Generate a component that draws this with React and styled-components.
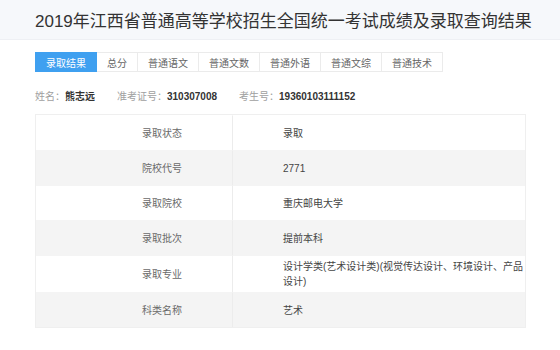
import React from 'react';
import styled, { createGlobalStyle } from 'styled-components';

const GlobalStyle = createGlobalStyle`
    body {
        margin: 0;
        background: #fff;
        font-family: "Liberation Sans", "Noto Sans CJK SC", sans-serif;
    }
`;

const Header = styled.div`
    height: 40px;
    display: flex;
    align-items: center;
    padding-left: 35px;
    background: #f6f8fb;
    border-bottom: 1px solid #eef0f4;
    box-sizing: border-box;
`;

const Title = styled.h1`
    margin: 0;
    font-size: 17px;
    font-weight: normal;
    color: #333;
    letter-spacing: 0;
`;

const Main = styled.div`
    padding: 12px 34px 0 35px;
`;

const Tabs = styled.div`
    display: flex;
    height: 20px;
`;

const Tab = styled.div`
    display: flex;
    align-items: center;
    justify-content: center;
    padding: 0 10px;
    font-size: 10px;
    color: ${p => (p.$active ? '#fff' : '#666')};
    background: ${p => (p.$active ? '#3fa0f0' : '#fff')};
    border: 1px solid ${p => (p.$active ? '#3fa0f0' : '#ebebeb')};
    border-left-width: ${p => (p.$first ? '1px' : '0')};
`;

const Info = styled.div`
    display: flex;
    gap: 22px;
    margin: 18px 0 10px;
    font-size: 10px;
    line-height: 14px;
`;

const Field = styled.span`
    color: #a0a0a0;
    b {
        color: #333;
        font-weight: 600;
    }
`;

const Table = styled.div`
    display: grid;
    grid-template-columns: 197px 1fr;
    border: 1px solid #efefef;
    font-size: 10px;
    line-height: 15px;
`;

const Cell = styled.div`
    min-height: 35px;
    box-sizing: border-box;
    display: flex;
    align-items: center;
    padding: 3px 0;
    background: ${p => (p.$odd ? '#f4f4f4' : '#fff')};
    border-top: 1px solid ${p => (p.$top ? 'transparent' : '#f4f4f4')};
`;

const Label = styled(Cell)`
    justify-content: flex-end;
    padding-right: 50px;
    color: #6a6a6a;
    border-right: 1px solid #ececec;
`;

const Value = styled(Cell)`
    padding-left: 50px;
    color: #444;
    span {
        max-width: 248px;
    }
`;

const tabs = ['录取结果', '总分', '普通语文', '普通文数', '普通外语', '普通文综', '普通技术'];

const rows = [
    ['录取状态', '录取'],
    ['院校代号', '2771'],
    ['录取院校', '重庆邮电大学'],
    ['录取批次', '提前本科'],
    ['录取专业', '设计学类(艺术设计类)(视觉传达设计、环境设计、产品设计)'],
    ['科类名称', '艺术'],
];

const App = () => {
    return (
        <>
            <GlobalStyle />
            <Header>
                <Title>2019年江西省普通高等学校招生全国统一考试成绩及录取查询结果</Title>
            </Header>
            <Main>
                <Tabs>
                    {tabs.map((t, i) => (
                        <Tab key={t} $active={i === 0} $first={i === 0}>{t}</Tab>
                    ))}
                </Tabs>
                <Info>
                    <Field>姓名：<b>熊志远</b></Field>
                    <Field>准考证号：<b>310307008</b></Field>
                    <Field>考生号：<b>19360103111152</b></Field>
                </Info>
                <Table>
                    {rows.map(([k, v], i) => (
                        <React.Fragment key={k}>
                            <Label $odd={i % 2 === 1} $top={i === 0}>{k}</Label>
                            <Value $odd={i % 2 === 1} $top={i === 0}><span>{v}</span></Value>
                        </React.Fragment>
                    ))}
                </Table>
            </Main>
        </>
    );
};

export default App;
